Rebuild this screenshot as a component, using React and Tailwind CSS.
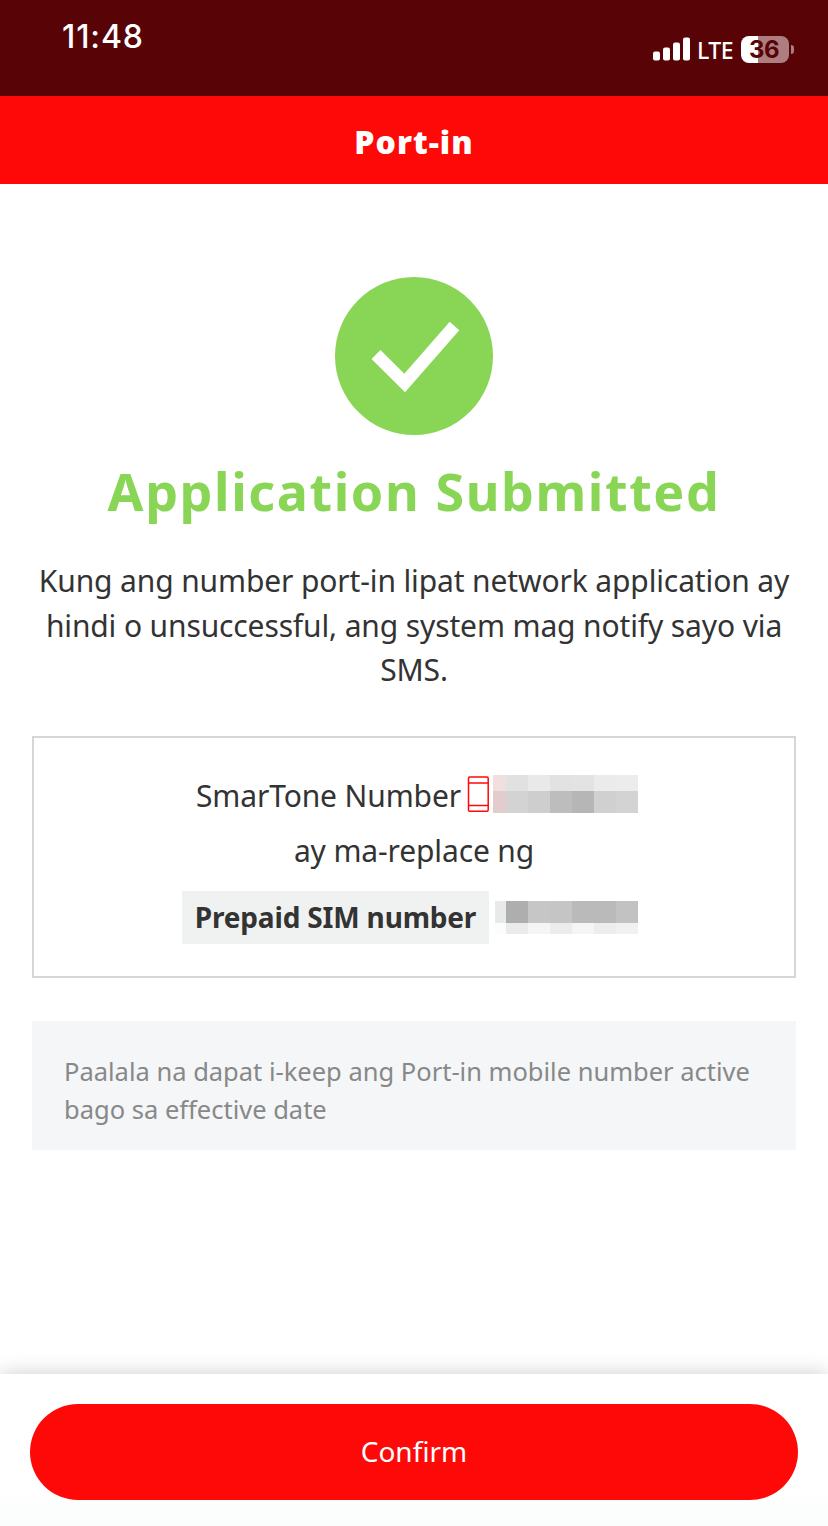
import React from "react";

// Censored digits: each row is a strip of grey cells
const smartoneMask = [
  ["bg-[#f0dfdf]", "bg-[#e1e1e1]", "bg-[#e9e9e9]", "bg-[#e2e2e2]", "bg-[#e3e3e3]", "bg-[#ebebeb]", "bg-[#ececec]"],
  ["bg-[#e3cccd]", "bg-[#d3d3d3]", "bg-[#cecece]", "bg-[#bdbdbd]", "bg-[#b6b6b6]", "bg-[#d0d0d0]", "bg-[#d3d3d3]"],
];
const prepaidMask = [
  ["bg-[#e8eae9]", "bg-[#aeaeae]", "bg-[#c6c6c6]", "bg-[#c5c5c5]", "bg-[#bababa]", "bg-[#bababa]", "bg-[#c2c2c2]"],
  ["bg-[#fbfdfc]", "bg-[#ebebeb]", "bg-[#f5f5f5]", "bg-[#ececec]", "bg-[#f5f5f5]", "bg-[#ededed]", "bg-[#f1f1f1]"],
];

const Mask = ({ rows, className }) => (
  <div className={`grid ${className}`}>
    {rows.flat().map((color, i) => (
      <span key={i} className={color} />
    ))}
  </div>
);

const StatusBar = () => (
  <div className="h-24 bg-[#580306] flex justify-between text-white font-['Inter']">
    <span className="pl-[62px] pt-[13px] text-[32px] leading-[48px] font-medium tracking-[0.9px]">
      11:48
    </span>
    <div className="h-[28px] mt-[35px] pr-[34px] flex items-center">
      <svg width="38" height="24" viewBox="0 0 38 24" fill="#fff">
        <rect x="0" y="14.5" width="7" height="9" rx="2" />
        <rect x="10" y="10.5" width="7" height="13" rx="2" />
        <rect x="20" y="5.5" width="7" height="18" rx="2" />
        <rect x="30" y="0.5" width="7" height="23" rx="2" />
      </svg>
      <span className="ml-[6px] w-[44px] pt-px text-[23px] leading-7 font-['Noto_Sans'] font-medium tracking-[-0.5px]">
        LTE
      </span>
      <div className="w-12 h-[27px] pt-[2px] pr-[2px] rounded-[8px] bg-linear-to-r from-white from-[17px] to-[#ad7d7f] to-[17px] flex items-center justify-center text-[#580306] text-[24px] leading-none font-bold tracking-[-0.5px]">
        36
      </div>
      <div className="ml-[2px] w-[3px] h-[9px] rounded-r-full bg-[#ad7d7f]" />
    </div>
  </div>
);

const App = () => {
  return (
    <div className="w-[828px] h-[1526px] bg-white flex flex-col text-[#333333] font-['Noto_Sans',sans-serif] overflow-hidden">
      <StatusBar />

      {/* Title bar */}
      <header className="h-[88px] pt-[3px] bg-[#ff0808] flex items-center justify-center text-white text-[32px] font-black tracking-[1px]">
        Port-in
      </header>

      <main className="flex-1 px-8 pt-[93px] flex flex-col">
        <svg className="self-center" width="158" height="158" viewBox="0 0 158 158">
          <circle cx="79" cy="79" r="79" fill="#89d555" />
          <path d="M41 77.5 69.7 106 119.5 49" fill="none" stroke="#fff" strokeWidth="12.7" />
        </svg>

        <h1 className="mt-5 text-center text-[#89d555] text-[52px] leading-[72px] font-bold tracking-[1.6px] whitespace-nowrap">
          Application Submitted
        </h1>

        <p className="mt-8 text-center text-[30px] leading-[44.5px] tracking-[-0.13px] whitespace-nowrap">
          Kung ang number port-in lipat network application ay
          <br />
          hindi o unsuccessful, ang system mag notify sayo via
          <br />
          SMS.
        </p>

        {/* Numbers */}
        <section className="mt-[43px] h-[242px] border-2 border-[#d6d6d6] pt-[37px] flex flex-col text-[30px] tracking-[-0.13px]">
          <div className="h-[38px] ml-[162px] flex items-start">
            <span className="w-[271px] leading-[41px] whitespace-nowrap">SmarTone Number</span>
            <svg width="26" height="38" viewBox="0 0 26 38" fill="none" stroke="#ff0808" strokeWidth="1.5">
              <rect x="1.5" y="2" width="19.7" height="34.3" rx="1.2" />
              <path d="M1.5 8H21.2M1.5 30.5H21.2" />
            </svg>
            <Mask rows={smartoneMask} className="grid-cols-[13px_repeat(6,22px)] grid-rows-[16px_22px]" />
          </div>
          <div className="mt-[17px] leading-[41px] text-center">ay ma-replace ng</div>
          <div className="mt-5 ml-[148px] flex items-start">
            <strong className="w-[307px] h-[53px] bg-[#f0f2f1] text-[28px] leading-[52px] font-bold text-center tracking-[-0.17px] whitespace-nowrap">
              Prepaid SIM number
            </strong>
            <Mask rows={prepaidMask} className="ml-[6px] mt-[10px] grid-cols-[11px_repeat(6,22px)] grid-rows-[22px_11px]" />
          </div>
        </section>

        {/* Reminder */}
        <p className="mt-[43px] h-[129px] bg-[#f4f6f8] pl-8 pt-[31px] text-[25.5px] leading-[38px] text-[#888888] whitespace-nowrap">
          Paalala na dapat i-keep ang Port-in mobile number active
          <br />
          bago sa effective date
        </p>
      </main>

      <footer className="h-[152px] bg-linear-to-b from-white from-75% to-[#fbfcfc] px-[30px] pt-[30px] shadow-[0_0_20px_rgba(0,0,0,0.2)]">
        <button className="w-full h-24 pb-[2px] rounded-full bg-[#ff0808] text-white text-[28px]">
          Confirm
        </button>
      </footer>
    </div>
  );
};

export default App;
